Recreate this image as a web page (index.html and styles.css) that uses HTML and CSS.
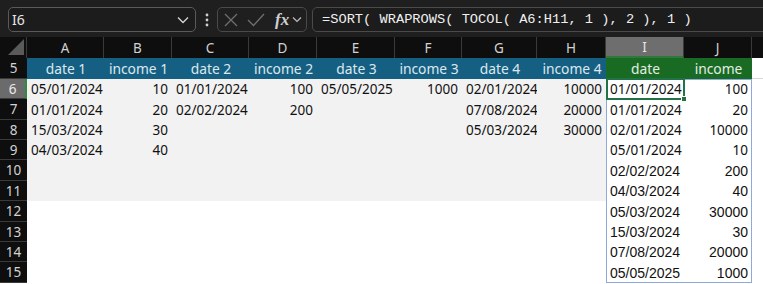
FILE: index.html
```html
<!DOCTYPE html>
<html>
<head>
<meta charset="utf-8">
<link rel="stylesheet" href="styles.css">
</head>
<body>
<div class="topbar">
  <div class="namebox">
    <span class="nametext">I6</span>
    <svg class="chev" width="12" height="8" viewBox="0 0 12 8"><polyline points="1,1.5 6,6.5 11,1.5" fill="none" stroke="#d6d6d6" stroke-width="1.3"/></svg>
  </div>
  <div class="dots">
    <svg width="4" height="14" viewBox="0 0 4 14"><circle cx="2" cy="2" r="1.4" fill="#d0d0d0"/><circle cx="2" cy="7" r="1.4" fill="#d0d0d0"/><circle cx="2" cy="12" r="1.4" fill="#d0d0d0"/></svg>
  </div>
  <div class="fxbox">
    <svg width="14" height="14" viewBox="0 0 14 14"><path d="M1 1 L13 13 M13 1 L1 13" stroke="#6f6f6f" stroke-width="1.3" fill="none"/></svg>
    <svg width="18" height="14" viewBox="0 0 18 14"><polyline points="1,7 6.5,12.5 17,1" stroke="#6f6f6f" stroke-width="1.3" fill="none"/></svg>
    <span class="fx">fx</span>
    <svg width="10" height="7" viewBox="0 0 10 7"><polyline points="1,1.5 5,5.5 9,1.5" fill="none" stroke="#bdbdbd" stroke-width="1.2"/></svg>
  </div>
  <div class="formula">=SORT( WRAPROWS( TOCOL( A6:H11, 1 ), 2 ), 1 )</div>
</div>

<div class="sheet">
  <!-- column headers -->
  <div class="corner"><svg width="16" height="16" viewBox="0 0 16 16"><polygon points="0,16 16,0 16,16" fill="#5a5a5a"/></svg></div>
  <div class="ch">A</div><div class="ch">B</div><div class="ch">C</div><div class="ch">D</div><div class="ch">E</div><div class="ch">F</div><div class="ch">G</div><div class="ch">H</div><div class="ch sel">I</div><div class="ch">J</div><div class="ch last"></div>

  <!-- row 5 -->
  <div class="rh">5</div>
  <div class="c hb">date 1</div><div class="c hb">income 1</div><div class="c hb">date 2</div><div class="c hb">income 2</div><div class="c hb">date 3</div><div class="c hb">income 3</div><div class="c hb">date 4</div><div class="c hb">income 4</div><div class="c hg">date</div><div class="c hg">income</div><div class="c fill5"></div>

  <!-- row 6 -->
  <div class="rh act">6</div>
  <div class="c g ap">05/01/2024</div><div class="c g ap n">10</div><div class="c g ap">01/01/2024</div><div class="c g ap n">100</div><div class="c g ap">05/05/2025</div><div class="c g ap n">1000</div><div class="c g ap">02/01/2024</div><div class="c g ap n">10000</div><div class="c ap">01/01/2024</div><div class="c ap n">100</div><div class="c"></div>

  <!-- row 7 -->
  <div class="rh">7</div>
  <div class="c g ap">01/01/2024</div><div class="c g ap n">20</div><div class="c g ap">02/02/2024</div><div class="c g ap n">200</div><div class="c g"></div><div class="c g"></div><div class="c g ap">07/08/2024</div><div class="c g ap n">20000</div><div class="c ap">01/01/2024</div><div class="c ap n">20</div><div class="c"></div>

  <!-- row 8 -->
  <div class="rh">8</div>
  <div class="c g ap">15/03/2024</div><div class="c g ap n">30</div><div class="c g"></div><div class="c g"></div><div class="c g"></div><div class="c g"></div><div class="c g ap">05/03/2024</div><div class="c g ap n">30000</div><div class="c ap">02/01/2024</div><div class="c ap n">10000</div><div class="c"></div>

  <!-- row 9 -->
  <div class="rh">9</div>
  <div class="c g ap">04/03/2024</div><div class="c g ap n">40</div><div class="c g"></div><div class="c g"></div><div class="c g"></div><div class="c g"></div><div class="c g"></div><div class="c g"></div><div class="c ap">05/01/2024</div><div class="c ap n">10</div><div class="c"></div>

  <!-- row 10 -->
  <div class="rh">10</div>
  <div class="c g"></div><div class="c g"></div><div class="c g"></div><div class="c g"></div><div class="c g"></div><div class="c g"></div><div class="c g"></div><div class="c g"></div><div class="c ar">02/02/2024</div><div class="c ar n">200</div><div class="c"></div>

  <!-- row 11 -->
  <div class="rh">11</div>
  <div class="c g"></div><div class="c g"></div><div class="c g"></div><div class="c g"></div><div class="c g"></div><div class="c g"></div><div class="c g"></div><div class="c g"></div><div class="c ar">04/03/2024</div><div class="c ar n">40</div><div class="c"></div>

  <!-- row 12 -->
  <div class="rh">12</div>
  <div class="c"></div><div class="c"></div><div class="c"></div><div class="c"></div><div class="c"></div><div class="c"></div><div class="c"></div><div class="c"></div><div class="c ar">05/03/2024</div><div class="c ar n">30000</div><div class="c"></div>

  <!-- row 13 -->
  <div class="rh">13</div>
  <div class="c"></div><div class="c"></div><div class="c"></div><div class="c"></div><div class="c"></div><div class="c"></div><div class="c"></div><div class="c"></div><div class="c ar">15/03/2024</div><div class="c ar n">30</div><div class="c"></div>

  <!-- row 14 -->
  <div class="rh">14</div>
  <div class="c"></div><div class="c"></div><div class="c"></div><div class="c"></div><div class="c"></div><div class="c"></div><div class="c"></div><div class="c"></div><div class="c ar">07/08/2024</div><div class="c ar n">20000</div><div class="c"></div>

  <!-- row 15 -->
  <div class="rh">15</div>
  <div class="c"></div><div class="c"></div><div class="c"></div><div class="c"></div><div class="c"></div><div class="c"></div><div class="c"></div><div class="c"></div><div class="c ar">05/05/2025</div><div class="c ar n">1000</div><div class="c"></div>

  <!-- overlays -->
  <div class="spill"></div>
  <div class="active"><span class="handle"></span></div>
</div>
</body>
</html>
```

FILE: styles.css
```css
* { box-sizing: border-box; }
html, body { margin: 0; padding: 0; background: #ffffff; overflow: hidden; }
body { width: 763px; height: 284px; }

.topbar {
  height: 37px;
  background: #1f1f1f;
  display: flex;
  align-items: flex-start;
  padding: 7px 0 0 8px;
  overflow: hidden;
}
.namebox {
  width: 188px;
  height: 25px;
  border: 1px solid #5a5a5a;
  border-radius: 5px;
  background: #1c1c1c;
  display: flex;
  align-items: center;
  justify-content: space-between;
  padding: 0 6px 0 3px;
}
.nametext {
  font-family: "Noto Sans", "Liberation Sans", sans-serif;
  font-size: 14px;
  color: #e8e8e8;
}
.dots {
  width: 21px;
  height: 25px;
  display: flex;
  align-items: center;
  justify-content: center;
}
.fxbox {
  width: 90px;
  height: 25px;
  border: 1px solid #4a4a4a;
  border-radius: 5px;
  display: flex;
  align-items: center;
  padding: 0 2px 0 6px;
  gap: 9px;
}
.fxbox .fx {
  font-family: "Liberation Serif", serif;
  font-style: italic;
  font-weight: bold;
  font-size: 17px;
  color: #cfcfcf;
  margin-left: 1px;
  margin-right: -6px;
  line-height: 1;
}
.formula {
  flex: 1;
  height: 25px;
  margin-left: 5px;
  margin-right: -10px;
  border: 1px solid #4a4a4a;
  border-radius: 5px;
  background: #1c1c1c;
  font-family: "Liberation Mono", "DejaVu Sans Mono", monospace;
  font-size: 13.7px;
  color: #f0f0f0;
  display: flex;
  align-items: center;
  padding-left: 9px;
  white-space: pre;
}

.sheet {
  position: relative;
  display: grid;
  grid-template-columns: 27px 77px 68px 77px 68px 78px 67px 75px 69px 78px 68px 1fr;
  grid-template-rows: 21px 21px 20px 21px 20px 20px 21px 20px 21px 20px 20px 21px;
}

.corner {
  background: #0e0e0e;
  border-right: 1px solid #3a3a3a;
  display: flex;
  align-items: flex-end;
  justify-content: flex-end;
  padding: 0 2px 3px 0;
}
.ch {
  background: #0e0e0e;
  border-right: 1px solid #3a3a3a;
  color: #d2d2d2;
  font-family: "Noto Sans", "Liberation Sans", sans-serif;
  font-size: 13.5px;
  display: flex;
  align-items: center;
  justify-content: center;
}
.ch.sel {
  background: #6e6e6e;
  color: #e6e6e6;
  border-bottom: 2px solid #2f7a3a;
}
.ch.last { border-right: none; }

.rh {
  background: #0e0e0e;
  border-bottom: 1px solid #3a3a3a;
  color: #d2d2d2;
  font-family: "Noto Sans", "Liberation Sans", sans-serif;
  font-size: 13.5px;
  display: flex;
  align-items: center;
  justify-content: center;
}
.rh.act {
  background: #6b6b6b;
  color: #ececec;
  border-right: 2px solid #2f8a45;
}

.c {
  display: flex;
  align-items: center;
  padding: 0 3px 0 4px;
  white-space: nowrap;
  overflow: hidden;
  color: #111111;
}
.c.n { justify-content: flex-end; padding-right: 4px; }
.c.g { background: #f2f2f2; }
.c.ap {
  font-family: "Noto Sans", "Open Sans", sans-serif;
  font-size: 13.5px;
}
.c.ar {
  font-family: "Liberation Sans", Arial, sans-serif;
  font-size: 14px;
}
.c.hb, .c.hg {
  justify-content: center;
  font-family: "Noto Sans", "Open Sans", sans-serif;
  font-size: 13.8px;
  color: #dde8ee;
}
.c.hb { background: #156082; }
.c.hg { background: #196b24; color: #e2eee2; }
.c.fill5 { border-bottom: 1px solid #d6d6d6; }

/* overlays drawn over the cells */
.spill {
  position: absolute;
  left: 606px;
  top: 42px;
  width: 146px;
  height: 204px;
  border: 1px solid #8cabdc;
  pointer-events: none;
}
.active {
  position: absolute;
  left: 606px;
  top: 41px;
  width: 79px;
  height: 22px;
  border: 2px solid #217346;
  pointer-events: none;
}
.handle {
  position: absolute;
  right: -4px;
  bottom: -4px;
  width: 6px;
  height: 6px;
  background: #217346;
  border: 1px solid #ffffff;
}
```
